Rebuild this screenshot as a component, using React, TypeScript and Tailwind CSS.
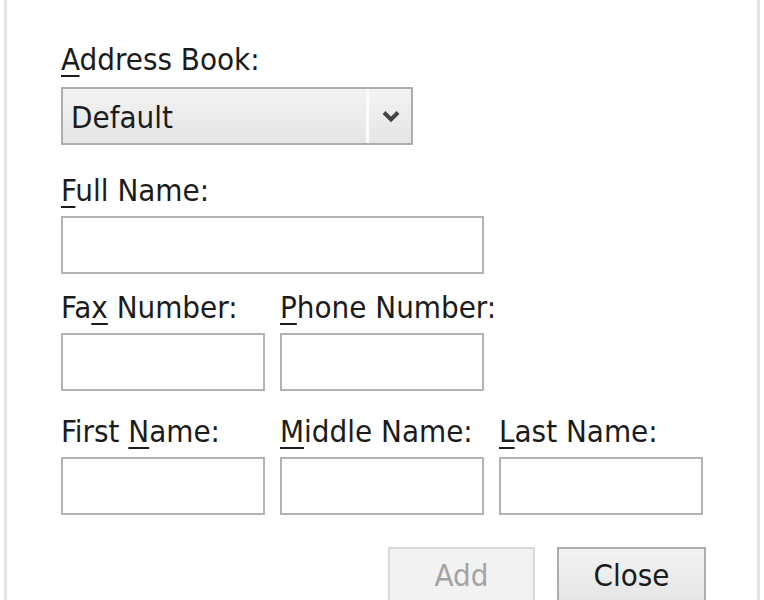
import React from "react";

const font = { fontFamily: '"DejaVu Sans Condensed", "DejaVu Sans", Tahoma, sans-serif' };

function Label({ pre, u, post }: { pre?: string; u: string; post: string }) {
  return (
    <div className="text-[31px] leading-[32px] text-[#1b1b1b] whitespace-nowrap">
      {pre}
      <span className="underline decoration-2 underline-offset-[5px]">{u}</span>
      {post}
    </div>
  );
}

function TextBox({ w }: { w: string }) {
  return <div className={`${w} h-[58px] border-2 border-[#b3b3b3] bg-white`} />;
}

export default function App() {
  return (
    <div className="h-[600px] w-[764px] overflow-hidden bg-white" style={font}>
      <div className="ml-[4px] h-full w-[756px] border-x-[3px] border-[#e4e4e4] pl-[54px] pt-[43px]">
        {/* Address book */}
        <Label u="A" post="ddress Book:" />
        <div className="mt-[12px] flex h-[58px] w-[352px] border-2 border-[#adadad] bg-gradient-to-b from-[#f3f3f3] to-[#e5e5e5]">
          <div className="flex flex-1 items-center pl-[8px] pt-[2px] text-[31px] text-[#1b1b1b]">Default</div>
          <div className="w-[3px] bg-[#fbfbfb]" />
          <div className="flex w-[42px] items-center justify-center pl-[2px]">
            <svg width="20" height="14" viewBox="0 0 20 14">
              <polyline points="3,3.5 10,10.5 17,3.5" fill="none" stroke="#454545" strokeWidth="4" />
            </svg>
          </div>
        </div>

        {/* Full name */}
        <div className="mt-[29px]">
          <Label u="F" post="ull Name:" />
        </div>
        <div className="mt-[10px]">
          <TextBox w="w-[423px]" />
        </div>

        {/* Fax / Phone */}
        <div className="mt-[17px] grid grid-cols-[204px_204px] gap-x-[15px]">
          <Label pre="Fa" u="x" post=" Number:" />
          <Label u="P" post="hone Number:" />
        </div>
        <div className="mt-[10px] grid grid-cols-[204px_204px] gap-x-[15px]">
          <TextBox w="w-[204px]" />
          <TextBox w="w-[204px]" />
        </div>

        {/* Names */}
        <div className="mt-[24px] grid grid-cols-[204px_204px_204px] gap-x-[15px]">
          <Label pre="First " u="N" post="ame:" />
          <Label u="M" post="iddle Name:" />
          <Label u="L" post="ast Name:" />
        </div>
        <div className="mt-[10px] grid grid-cols-[204px_204px_204px] gap-x-[15px]">
          <TextBox w="w-[204px]" />
          <TextBox w="w-[204px]" />
          <TextBox w="w-[204px]" />
        </div>

        {/* Buttons */}
        <div className="mt-[32px] flex w-[645px] justify-end gap-[22px]">
          <div className="flex h-[56px] w-[147px] items-center justify-center border-2 border-[#d9d9d9] bg-[#f2f2f2] text-[31px] text-[#a3a3a3]">
            Add
          </div>
          <div className="flex h-[56px] w-[149px] items-center justify-center border-2 border-[#adadad] bg-gradient-to-b from-[#f3f3f3] to-[#e5e5e5] text-[31px] text-[#1b1b1b]">
            Close
          </div>
        </div>
      </div>
    </div>
  );
}
